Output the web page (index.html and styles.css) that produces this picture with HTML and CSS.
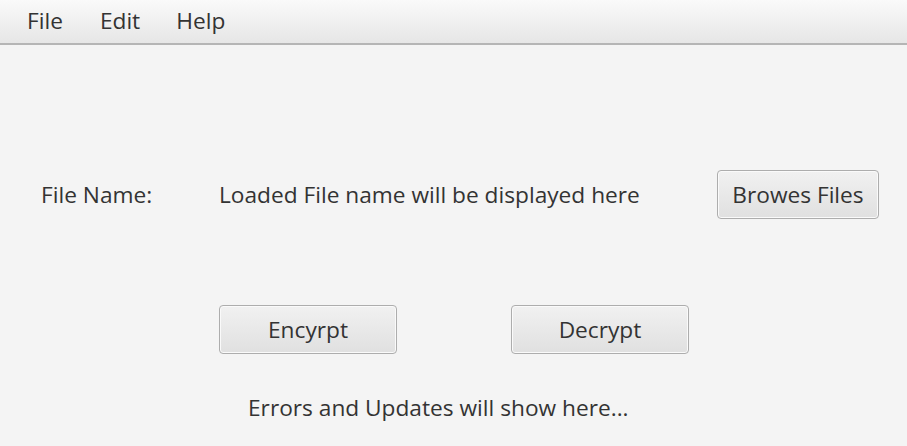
FILE: index.html
```html
<!DOCTYPE html>
<html>
<head>
<meta charset="utf-8">
<link rel="stylesheet" href="styles.css">
</head>
<body>
<div class="menubar">
  <span class="menu m-file">File</span>
  <span class="menu m-edit">Edit</span>
  <span class="menu m-help">Help</span>
</div>
<main class="content">
  <div class="row-file">
    <span class="label">File Name:</span>
    <span class="filename">Loaded File name will be displayed here</span>
    <button class="btn btn-browse">Browes Files</button>
  </div>
  <div class="row-actions">
    <button class="btn btn-action">Encyrpt</button>
    <button class="btn btn-action">Decrypt</button>
  </div>
  <div class="status">Errors and Updates will show here...</div>
</main>
</body>
</html>
```

FILE: styles.css
```css
html, body {
  margin: 0;
  padding: 0;
  background: #f4f4f4;
  width: 907px;
  height: 446px;
  overflow: hidden;
  font-family: "Open Sans", "Noto Sans", sans-serif;
  font-size: 22.7px;
  color: #333333;
}
.menubar {
  border-bottom: 2px solid #b5b5b5;
  background: linear-gradient(#fafafa, #e6e6e6);
  display: flex;
  align-items: center;
  box-sizing: border-box;
  height: 45px;
  padding-bottom: 1px;
}
.menu { line-height: 1; }
.m-file { margin-left: 27px; }
.m-edit { margin-left: 37px; }
.m-help { margin-left: 36px; }

.content {
  display: flex;
  flex-direction: column;
}
.row-file {
  display: flex;
  align-items: center;
  margin-top: 125px;
  height: 49px;
}
.label { margin-left: 41px; width: 178px; }
.filename { width: 498px; }
.btn {
  font-family: inherit;
  font-size: 22.7px;
  color: #333333;
  border: 1px solid #adadad;
  border-radius: 4px;
  background: linear-gradient(#f1f1f1, #e0e0e0);
  box-shadow: inset 0 0 0 1px #fafafa;
  height: 49px;
  padding: 0;
  box-sizing: border-box;
}
.btn-browse { width: 162px; }
.row-actions {
  display: flex;
  margin-top: 86px;
  margin-left: 219px;
  gap: 114px;
}
.btn-action { width: 178px; }
.status {
  margin-top: 38px;
  margin-left: 248px;
}
```
